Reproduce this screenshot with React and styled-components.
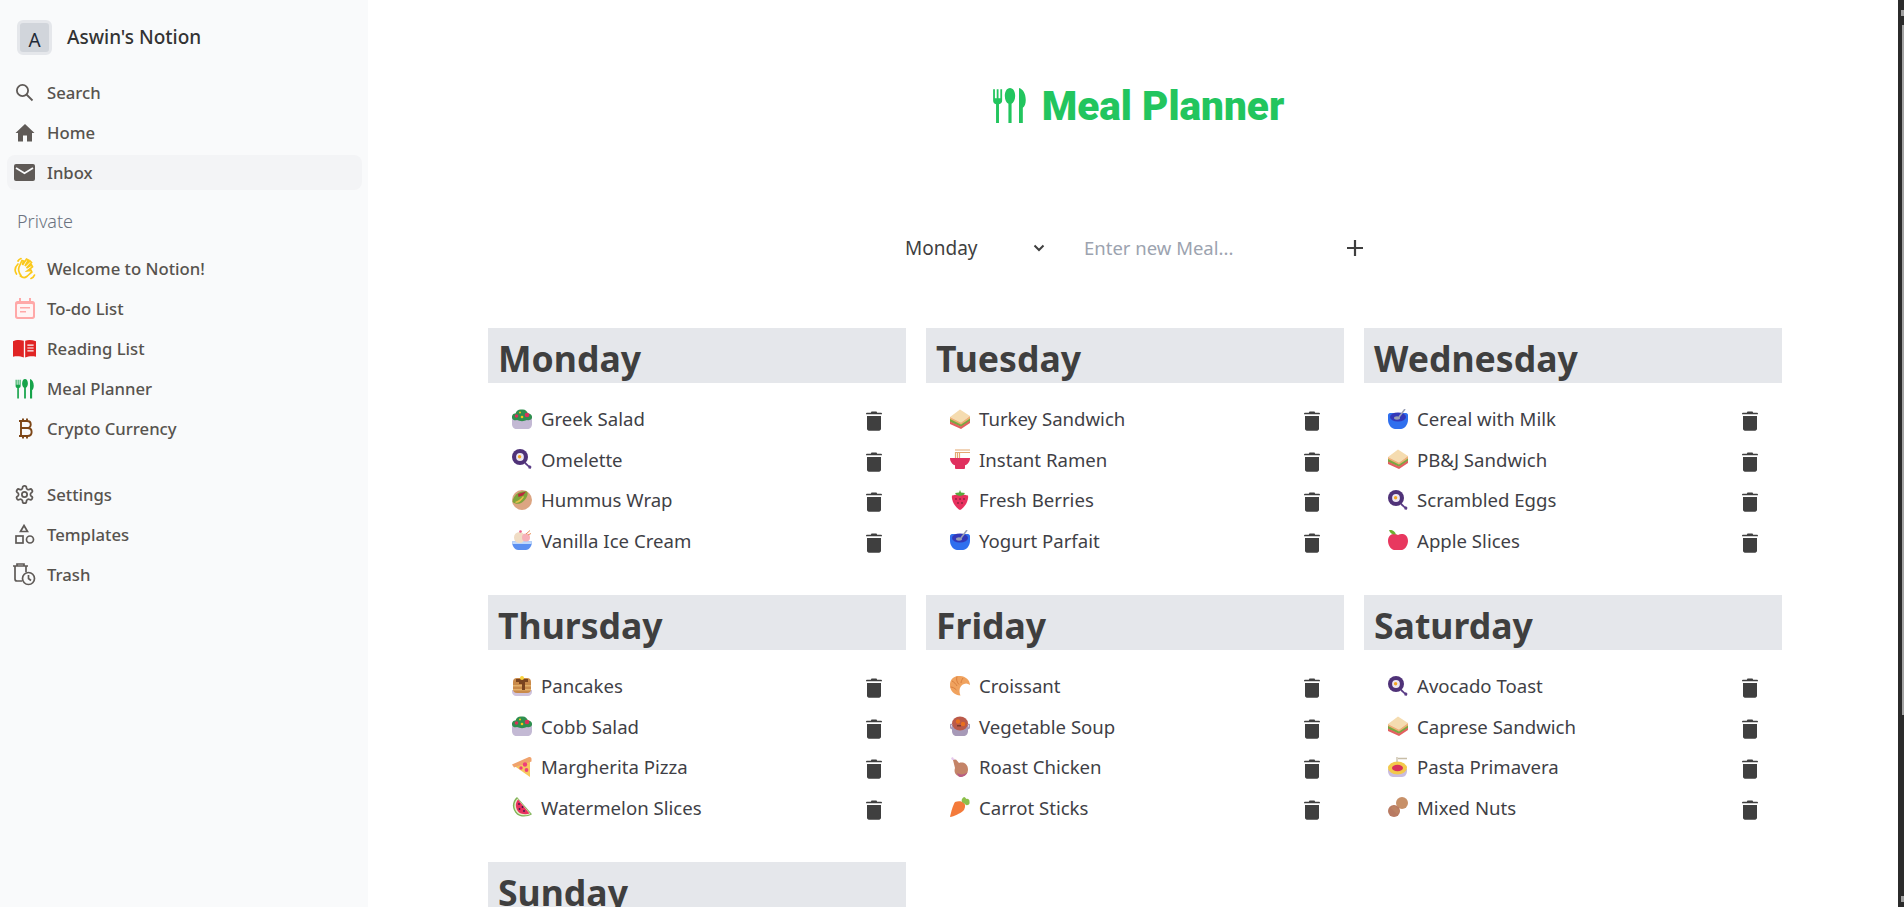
import styled, { createGlobalStyle } from 'styled-components'

const GlobalStyle = createGlobalStyle`
  html, body {
    margin: 0;
    height: 100%;
    overflow: hidden;
    background: #fff;
  }
  * { box-sizing: border-box; }
`

const Trash2 = () => (
  <svg width="16" height="20" viewBox="0 0 16 20">
    <path fill="#3f3f3f" d="M5.5 .6h5l.7 1.200h3.900c.5 0 .9.400.9.900v.6H0v-.6c0-.5.400-.9.900-.9h3.900zM1 5h14v12.800c0 1.100-.8 1.900-1.900 1.900H2.900c-1.100 0-1.900-.8-1.900-1.900z" />
  </svg>
)

const Cutlery = ({ size, color }) => (
  <svg width={size} height={size} viewBox="0 0 32 32" fill={color}>
    <path d="M1 1h1.600v8h1.600V1h1.600v8h1.600V1H9v10c0 1.800-1.200 3-2.800 3.400V31H3.600V14.400C2 14 1 12.800 1 11z" />
    <path d="M16 0c2.800 0 4.600 3.200 4.600 7 0 3.600-1.600 6.200-3.200 7V31h-2.800V14c-1.800-.8-3.200-3.400-3.200-7 0-3.800 1.800-7 4.600-7z" />
    <path d="M24 0c3.600 1 6 5 6 10.600 0 3-.8 5.800-2.600 7V31H24z" />
  </svg>
)

const Emoji = ({ name }) => {
  const art = {
    salad: <>
      <path fill="#c3b9d4" d="M0 8h20v7c0 3-2 5-4.500 5h-11C2 20 0 18 0 15z" />
      <path fill="#2f8f4e" d="M0 9c-.5-3 1.500-5 3.500-4.500C4.500 1 7 0 10 .5c3-.5 5 1.500 6 4 2.500-.5 4.500 2 4 4.500-1 2-3 2.500-5 2-3 1.500-7 1.500-10 0-2 .5-4 .5-5-2z" />
      <circle fill="#d8315b" cx="4.500" cy="7" r="1.800" /><circle fill="#d8315b" cx="15" cy="6" r="2.300" />
      <circle fill="#f5c518" cx="10" cy="8" r="1.300" /><circle fill="#f5c518" cx="8" cy="3.500" r="1" />
    </>,
    pan: <>
      <path fill="#5a3c86" d="M13.500 13l3.500 3.500 1-.2 1.500 1.500-.7 2-2.200-.2-.4-1.700-3.700-3.200z" />
      <circle fill="#4f3278" cx="8" cy="8" r="8" />
      <circle fill="#ece6f2" cx="8" cy="8" r="3.900" /><circle fill="#f6a623" cx="7.600" cy="7.800" r="1.700" />
    </>,
    wrap: <>
      <circle fill="#dca582" cx="10" cy="10" r="10" />
      <path fill="#7fa43a" d="M.5 12C1 5 8 0 15 1.500c2 3-1 8-5 11-3 2-7 1.500-9.500-.5z" />
      <path fill="#b9283f" d="M6 4l8-2.500-3 4-4.500 1.500z" />
      <path fill="#e8c04a" d="M3 12c3-1 6-3 8-6l1 1c-2 3-5 6-8 6z" />
    </>,
    icecream: <>
      <path fill="#5b8ff0" d="M0 11.500h20c0 5-3.500 8.500-6 8.500H6c-2.500 0-6-3.500-6-8.500z" />
      <path fill="#bfd8fb" d="M0 11.500h20l-.4 2.500H.4z" />
      <circle fill="#f0dcc4" cx="7.500" cy="7.500" r="5.500" /><circle fill="#f7b0b8" cx="14" cy="7.500" r="4" />
      <path stroke="#e88f5c" strokeWidth="1" d="M14 4l4-3.500M16 5l3-1.500" />
      <circle fill="#ef5f86" cx="8.500" cy="1.500" r="1.300" />
    </>,
    sandwich: <>
      <path fill="#f5dcb0" d="M0 8L10 .5 20 7l-9 6.500z" />
      <path fill="#eeb077" d="M0 8l11 5.500L20 7v3l-9 6-11-5z" />
      <path fill="#79a940" d="M0 10l11 5.500L20 9.500v3L11 18 0 13z" />
      <path fill="#e26060" d="M0 12.500L11 17.500l9-6v2.500l-9 6-11-5z" />
    </>,
    ramen: <>
      <path stroke="#e3a871" strokeWidth="1.200" fill="none" d="M5.500 10V3M7.500 10V3M9.500 10V3M5 1h15M5 3.500h15" />
      <path fill="#e0305f" d="M0 9h20c0 4-2.500 6.500-5 7.300V19c0 .5-.5 1-1 1H6c-.5 0-1-.5-1-1v-2.700C2.500 15.500 0 13 0 9z" />
    </>,
    berry: <>
      <path fill="#e8315f" d="M2 5.500c3-1.500 13-1.500 16 0 1 5-3.500 12.500-8 14.500C5.500 18 1 10.500 2 5.500z" />
      <path fill="#58a83c" d="M10 0l1 2.500 4 .5-1.500 2-3.500 1-3.500-1L5 3l4-.5z" />
      <g fill="#3b1a22"><circle cx="6" cy="9" r=".7" /><circle cx="10" cy="9" r=".7" /><circle cx="14" cy="9" r=".7" /><circle cx="8" cy="13" r=".7" /><circle cx="12" cy="13" r=".7" /></g>
    </>,
    bowl: <>
      <path fill="#2f6fee" d="M0 6c0-1 1-2 2-2h16c1 0 2 1 2 2v5c0 5-4 9-7 9H7c-3 0-7-4-7-9z" />
      <ellipse fill="#3338b8" cx="10" cy="8" rx="8" ry="4.500" />
      <path stroke="#9a9fb4" strokeWidth="1.500" d="M17 0L11 8" />
      <ellipse fill="#9a9fb4" cx="9" cy="9" rx="3" ry="1.700" />
    </>,
    apple: <>
      <path fill="#e8385f" d="M10 5c3-2 10-1.500 10 6 0 5-4 9-6 9H6c-2 0-6-4-6-9 0-7.500 7-8 10-6z" />
      <path fill="#6fae2f" d="M1 0c3-.5 6 1 7 4.500-3 .5-6-1-7-4.500z" />
    </>,
    pancake: <>
      <path fill="#cfc3dc" d="M0 14h20v2c0 2-2 4-4 4H4c-2 0-4-2-4-4z" />
      <rect fill="#c98a4a" x="1" y="2" width="18" height="15" rx="4" />
      <path fill="#e3b06a" d="M1 9h18v1.500H1zM1 13h18v1.500H1z" />
      <path fill="#7a4420" d="M4 3h12v3h-3v8h-3V8H7V6H4z" />
      <circle fill="#f8d23c" cx="10" cy="2" r="2" />
    </>,
    pizza: <>
      <path fill="#f6c85f" d="M1 8L18 2v18z" />
      <path fill="#f0a36d" d="M0 7.500L17 0c1.500 0 2.500.5 2.500 2v2.500L2 10.500z" />
      <g fill="#ef3f7a"><circle cx="13" cy="7.500" r="2.200" /><circle cx="9" cy="11" r="1.700" /><circle cx="14.500" cy="13" r="1.900" /></g>
    </>,
    melon: <>
      <path fill="#7fb256" d="M5 0C0 4-1 12 5 17.500c3 2.500 10 3 15-.2z" />
      <path fill="#e6f0c9" d="M5.500 1.500C1.500 5 1 12 6 16.500c3 2.300 9 2.500 12.500 .5z" />
      <path fill="#e8315f" d="M6 2.500C3 6 3 11.500 7 15.500c3 2 7.500 2 10.500 1z" />
      <g fill="#3a1a4a"><circle cx="7" cy="7" r=".9" /><circle cx="10.500" cy="10" r=".9" /><circle cx="7.500" cy="12" r=".9" /><circle cx="12" cy="14" r=".9" /></g>
    </>,
    croissant: <>
      <path fill="#f0a25e" d="M8 0c6-.5 12 3 12 9-2-1.500-4-2-6-1-3 1-4.500 4-4.500 6.500 0 2 .5 4 1 5C4 19 0 15 0 9 0 4 3 .5 8 0z" />
      <path stroke="#d97f3f" strokeWidth="1" fill="none" d="M7 .5c-1 3 0 6 2 8M13 2c-1 1.500-2 3.500-2 5M2 5c2 1 4 3 5 5M.5 11c2 0 4 1 6 3" />
    </>,
    soup: <>
      <path fill="#a79ab8" d="M2 9h16v6c0 3-2 5-4.500 5h-7C4 20 2 18 2 15z" />
      <path stroke="#a79ab8" strokeWidth="1.500" fill="none" d="M2 8.500H1c-.8 0-.8 4 1 4M18 8.500h1c.8 0 .8 4-1 4" />
      <ellipse fill="#ba5a4a" cx="10" cy="7.500" rx="8" ry="7" />
      <circle fill="#e8701f" cx="8" cy="5.500" r="2.200" /><circle fill="#e8701f" cx="13" cy="8" r="2.200" />
      <path fill="#7a3a2a" d="M7 9h4v1.500H7z" />
    </>,
    chicken: <>
      <path fill="#e5c8ec" d="M1 1l2-1 .5 1.500L5 2 4.500 3.500 2 3z" />
      <path fill="#c48468" d="M3 3l3-.5 3 3.500c5-1.500 9 1.500 9 6.500s-4 7.500-8 7c-4-.5-6.500-4-5-8.500z" />
      <path fill="#b85d84" d="M7 16c3 2 8 2 10.500-1-1 3-4 5-7.500 5-1 0-2-.5-3-4z" />
    </>,
    carrot: <>
      <path fill="#f47a3a" d="M5 5c3-1 7-1 9 1s1 6-1 8c-3 2.500-9 5.500-13 6C1 15 3 8 5 5z" />
      <path fill="#8cbf4a" d="M12 5c-1-2 0-4 2-5 1 0 2 1 2 2 2-1 4 1 3.500 3 .5 1.500-.5 3-2 3-1 .5-2 0-2.500-1z" />
    </>,
    pasta: <>
      <path fill="#c9bce0" d="M0 12h19v2c0 3-2 6-5 6H5c-3 0-5-3-5-6z" />
      <ellipse fill="#f2c94c" cx="9.500" cy="11" rx="9.500" ry="6.500" />
      <ellipse fill="#d8315b" cx="9.500" cy="11" rx="5.500" ry="3.300" />
      <path stroke="#c7bda6" strokeWidth="1.300" d="M9 5V0M10 1.500h9" />
    </>,
    nuts: <>
      <circle fill="#c79068" cx="14" cy="6" r="6" />
      <circle fill="#b87a62" cx="6" cy="14" r="6" />
      <path fill="#bd8364" d="M6 8l6 6-3 3-6-6z" />
    </>,
  }
  return <EmojiBox viewBox="0 0 20 20">{art[name]}</EmojiBox>
}

const navTop = [
  { label: 'Search', icon: <svg width="19" height="19" viewBox="0 0 19 19" fill="none" stroke="#5f5a57" strokeWidth="1.800"><circle cx="7.500" cy="7.500" r="5.600" /><path d="M11.500 11.500l6 6" /></svg> },
  { label: 'Home', icon: <svg width="20" height="20" viewBox="0 0 20 20" fill="#5f5a57"><path d="M10 1L.5 10H3v8.500h5v-6h4v6h5V10h2.500z" /></svg> },
  { label: 'Inbox', active: true, icon: <svg width="21" height="17" viewBox="0 0 21 17"><rect width="21" height="17" rx="2" fill="#5f5a57" /><path d="M2 4l8.500 5.300L19 4" fill="none" stroke="#f9fafb" strokeWidth="1.800" /></svg> },
]

const navPrivate = [
  { label: 'Welcome to Notion!', icon: <svg width="23" height="23" viewBox="0 0 23 23" fill="none" stroke="#fbc91b" strokeWidth="1.700" strokeLinecap="round"><path d="M5 7c-3 3-3.500 7-1.500 10M8 1.500C6.500 2 5.500 3 5 4M18 21.500c1.500-.5 3-2 3.500-3.500" /><path d="M8 18.500C6 16 5 13 6 10l3-6.500 1.500.5-1 4 4-6 2 1-3.500 6 5-5 1.500 1.500-5 5.500 5-3 1 1.800-5 4 3.500-.5.800 1.700c-2 1.500-3 3-5 4.500s-4.500 1-6.300-.5z" /></svg> },
  { label: 'To-do List', icon: <svg width="20" height="21" viewBox="0 0 20 21"><path fill="#ffa8a8" d="M4 0h2v3h8V0h2v3h1.500C19 3 20 4 20 5.500v13c0 1.500-1 2.500-2.500 2.500h-15C1 21 0 20 0 18.500v-13C0 4 1 3 2.500 3H4z" /><rect x="2" y="6" width="16" height="13" rx="1" fill="#fff4f4" /><path fill="#ffa8a8" d="M5 9h10v1.600H5zM5 13h6v1.600H5z" /></svg> },
  { label: 'Reading List', icon: <svg width="24" height="19" viewBox="0 0 24 19" fill="#e02424"><path d="M0 2c3-1.500 7-2 11.300-.5V19C8 17.500 4 17.300 0 18z" /><path d="M12.700 1.500C16 0 20 .5 24 2v16c-4-.7-8-.5-11.300 1z" /><path stroke="#fbfcfe" strokeWidth="1.200" d="M15 6h6.500M15 9h6.500M15 12h6.500" /></svg> },
  { label: 'Meal Planner', icon: <Cutlery size={20} color="#16a34a" /> },
  { label: 'Crypto Currency', icon: <svg width="20" height="21" viewBox="0 0 20 21" fill="none" stroke="#7c4516" strokeWidth="1.900"><path d="M4 3h8c5 0 5 7 0 7H5.500h7c5.500 0 5.500 8 0 8H4M6 3v15M8 .5V3M12 .5V3M8 18v2.500M12 18v2.500" /></svg> },
]

const navBottom = [
  { label: 'Settings', icon: <svg width="21" height="21" viewBox="0 0 24 24" fill="none" stroke="#5f5a57" strokeWidth="2"><path d="M12.200 2h-.4a2 2 0 0 0-2 2v.2a2 2 0 0 1-1 1.700l-.4.300a2 2 0 0 1-2 0l-.2-.1a2 2 0 0 0-2.700.7l-.2.400a2 2 0 0 0 .7 2.700l.2.100a2 2 0 0 1 1 1.700v.5a2 2 0 0 1-1 1.700l-.2.100a2 2 0 0 0-.7 2.700l.2.400a2 2 0 0 0 2.700.7l.2-.1a2 2 0 0 1 2 0l.4.300a2 2 0 0 1 1 1.700v.2a2 2 0 0 0 2 2h.4a2 2 0 0 0 2-2v-.2a2 2 0 0 1 1-1.700l.4-.3a2 2 0 0 1 2 0l.2.100a2 2 0 0 0 2.700-.7l.2-.4a2 2 0 0 0-.7-2.700l-.2-.1a2 2 0 0 1-1-1.700v-.5a2 2 0 0 1 1-1.700l.2-.1a2 2 0 0 0 .7-2.700l-.2-.4a2 2 0 0 0-2.700-.7l-.2.100a2 2 0 0 1-2 0l-.4-.3a2 2 0 0 1-1-1.700V4a2 2 0 0 0-2-2z" /><circle cx="12" cy="12" r="3" /></svg> },
  { label: 'Templates', icon: <svg width="21" height="21" viewBox="0 0 21 21" fill="none" stroke="#5f5a57" strokeWidth="1.700"><path d="M10 1.500l3.500 6h-7z" /><rect x="2" y="12" width="7" height="7" /><circle cx="16" cy="15.500" r="3.500" /></svg> },
  { label: 'Trash', icon: <svg width="23" height="23" viewBox="0 0 23 23" fill="none" stroke="#5f5a57" strokeWidth="1.700"><path d="M0 3h15M4 3V1h7v2M2 3v13c0 1 .5 2 2 2h5M13 3v6" /><circle cx="15.500" cy="15.500" r="6" /><path d="M15.500 12v3.500l2.500 2" /></svg> },
]

const days = [
  { name: 'Monday', meals: [['salad', 'Greek Salad'], ['pan', 'Omelette'], ['wrap', 'Hummus Wrap'], ['icecream', 'Vanilla Ice Cream']] },
  { name: 'Tuesday', meals: [['sandwich', 'Turkey Sandwich'], ['ramen', 'Instant Ramen'], ['berry', 'Fresh Berries'], ['bowl', 'Yogurt Parfait']] },
  { name: 'Wednesday', meals: [['bowl', 'Cereal with Milk'], ['sandwich', 'PB&J Sandwich'], ['pan', 'Scrambled Eggs'], ['apple', 'Apple Slices']] },
  { name: 'Thursday', meals: [['pancake', 'Pancakes'], ['salad', 'Cobb Salad'], ['pizza', 'Margherita Pizza'], ['melon', 'Watermelon Slices']] },
  { name: 'Friday', meals: [['croissant', 'Croissant'], ['soup', 'Vegetable Soup'], ['chicken', 'Roast Chicken'], ['carrot', 'Carrot Sticks']] },
  { name: 'Saturday', meals: [['pan', 'Avocado Toast'], ['sandwich', 'Caprese Sandwich'], ['pasta', 'Pasta Primavera'], ['nuts', 'Mixed Nuts']] },
  { name: 'Sunday', meals: [] },
]

const NavRow = ({ item }) => (
  <NavItem $active={item.active}>
    <NavIcon>{item.icon}</NavIcon>
    {item.label}
  </NavItem>
)

export default function App() {
  return (
    <Page>
      <GlobalStyle />
      <Sidebar>
        <Workspace>
          <Avatar>A</Avatar>
          <WorkspaceName>Aswin's Notion</WorkspaceName>
        </Workspace>
        <NavList>
          {navTop.map(item => <NavRow key={item.label} item={item} />)}
        </NavList>
        <SectionLabel>Private</SectionLabel>
        <NavList>
          {navPrivate.map(item => <NavRow key={item.label} item={item} />)}
        </NavList>
        <BottomNav>
          {navBottom.map(item => <NavRow key={item.label} item={item} />)}
        </BottomNav>
      </Sidebar>
      <Main>
        <Title>
          <Cutlery size={36} color="#22c55e" />
          Meal Planner
        </Title>
        <AddForm>
          <DayPicker>
            Monday
            <svg width="12" height="8" viewBox="0 0 12 8" fill="none" stroke="#3f3f3f" strokeWidth="2"><path d="M1.500 1.500L6 6l4.500-4.500" /></svg>
          </DayPicker>
          <MealInput placeholder="Enter new Meal..." />
          <AddButton aria-label="add">
            <svg width="18" height="18" viewBox="0 0 18 18" stroke="#3f3f3f" strokeWidth="2.200"><path d="M9 1v16M1 9h16" /></svg>
          </AddButton>
        </AddForm>
        <DayGrid>
          {days.map(day => (
            <DayCard key={day.name}>
              <DayHeading>{day.name}</DayHeading>
              <MealList>
                {day.meals.map(([emoji, text]) => (
                  <MealRow key={text}>
                    <MealName><Emoji name={emoji} />{text}</MealName>
                    <DeleteButton aria-label="delete"><Trash2 /></DeleteButton>
                  </MealRow>
                ))}
              </MealList>
            </DayCard>
          ))}
        </DayGrid>
      </Main>
      <Scrollbar>
        <ScrollArrow />
        <ScrollThumb />
        <ScrollArrow $bottom />
      </Scrollbar>
    </Page>
  )
}

const font = `"Noto Sans", "Open Sans", "Liberation Sans", sans-serif`

const Page = styled.div`
  display: flex;
  height: 907px;
  overflow: hidden;
  font-family: ${font};
  color: #3f3f3f;
`

const Sidebar = styled.aside`
  width: 368px;
  flex-shrink: 0;
  background: #f9fafb;
  padding: 19px 6px 0 7px;
`

const Workspace = styled.div`
  display: flex;
  align-items: center;
  gap: 15px;
  padding-left: 10px;
  height: 37px;
  margin-bottom: 19px;
`

const Avatar = styled.div`
  width: 35px;
  height: 35px;
  display: flex;
  align-items: center;
  justify-content: center;
  padding-top: 4px;
  border: 3px solid #e5e7eb;
  border-radius: 6px;
  background: #d1d5db;
  color: #1f2937;
  font-size: 19px;
`

const WorkspaceName = styled.div`
  padding-bottom: 2px;
  font-size: 19px;
  font-weight: 500;
  color: #333;
`

const NavList = styled.div`
  display: flex;
  flex-direction: column;
  gap: 5px;
`

const BottomNav = styled(NavList)`
  margin-top: 31px;
`

const NavItem = styled.div`
  height: 35px;
  display: flex;
  align-items: center;
  gap: 11px;
  padding-left: 6px;
  border-radius: 8px;
  font-size: 16.7px;
  font-weight: 500;
  color: #57534e;
  background: ${p => (p.$active ? '#f3f4f6' : 'transparent')};
`

const NavIcon = styled.span`
  width: 23px;
  height: 23px;
  display: flex;
  align-items: center;
  justify-content: center;
  flex-shrink: 0;
`

const SectionLabel = styled.div`
  margin: 20px 0 19px 10px;
  font-size: 18px;
  font-weight: 300;
  line-height: 22px;
  color: #6b7280;
`

const Main = styled.main`
  flex: 1;
  min-width: 0;
  padding-left: 120px;
`

const Title = styled.h1`
  display: flex;
  align-items: center;
  justify-content: center;
  gap: 14px;
  height: 36px;
  margin: 88px 0 0;
  width: 1300px;
  color: #22c55e;
  font-size: 40.5px;
  font-weight: 900;
  font-family: Roboto, "Noto Sans", sans-serif;
`

const AddForm = styled.div`
  display: flex;
  align-items: center;
  height: 36px;
  margin: 106px 0 0 417px;
`

const DayPicker = styled.div`
  width: 147px;
  display: flex;
  align-items: center;
  justify-content: space-between;
  padding-right: 7px;
  font-size: 19px;
  color: #3f3f3f;
`

const MealInput = styled.input`
  width: 294px;
  border: 0;
  outline: none;
  padding: 0 0 2px 32px;
  font: 18.5px ${font};
  &::placeholder { color: #9ca3af; opacity: 1; }
`

const AddButton = styled.button`
  display: flex;
  padding: 0;
  border: 0;
  background: none;
`

const DayGrid = styled.div`
  display: grid;
  grid-template-columns: repeat(3, 418px);
  column-gap: 20px;
  row-gap: 34px;
  margin-top: 62px;
`

const DayCard = styled.section`
  min-width: 0;
`

const DayHeading = styled.h2`
  margin: 0;
  height: 55px;
  padding-left: 10px;
  background: #e5e7eb;
  color: #3f3f3f;
  font-size: 35.6px;
  font-weight: 700;
  line-height: 60px;
  overflow: hidden;
`

const MealList = styled.ul`
  list-style: none;
  margin: 16px 0 0;
  padding: 0 24px;
  display: flex;
  flex-direction: column;
`

const MealRow = styled.li`
  height: 40.5px;
  display: flex;
  align-items: center;
  justify-content: space-between;
`

const MealName = styled.span`
  display: flex;
  align-items: center;
  gap: 9px;
  padding-bottom: 1px;
  font-size: 18.6px;
  color: #3f3f46;
`

const EmojiBox = styled.svg`
  width: 20px;
  height: 20px;
  flex-shrink: 0;
`

const DeleteButton = styled.button`
  display: flex;
  padding: 0;
  margin: 4px 0 0;
  border: 0;
  background: none;
`

const Scrollbar = styled.div`
  width: 6px;
  flex-shrink: 0;
  display: flex;
  flex-direction: column;
  align-items: flex-end;
  background: #2b2b2b;
`

const ScrollArrow = styled.div`
  width: 3px;
  height: 6px;
  margin-top: ${p => (p.$bottom ? 'auto' : '10px')};
  margin-bottom: ${p => (p.$bottom ? '5px' : '0')};
  background: #9f9f9f;
`

const ScrollThumb = styled.div`
  width: 2px;
  height: 690px;
  margin-top: 9px;
  background: #a3a3a3;
`
